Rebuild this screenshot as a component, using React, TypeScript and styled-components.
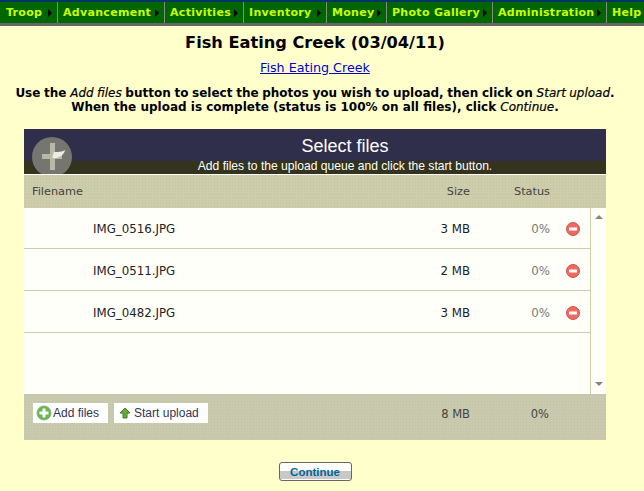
import * as React from 'react'
import styled, {createGlobalStyle, css} from 'styled-components'

const dots = (color: string, tile: number) => css`
  background-image: radial-gradient(${color} 0.6px, transparent 0.7px);
  background-size: ${tile}px ${tile}px;
`

const GlobalStyle = createGlobalStyle`
  html, body {
    margin: 0;
    padding: 0;
    background-color: #ffffcc;
    ${dots('#fdfdb0', 4)}
  }
  body {
    font-family: 'DejaVu Sans', Verdana, sans-serif;
    color: #000;
  }
`

const NavBar = styled.nav`
  display: flex;
  height: 21px;
  overflow: hidden;
  background-color: #006600;
  ${dots('#004d00', 6)}
  border-top: solid 2px #003366;
  border-bottom: solid 3px #666666;
`

const NavItem = styled.div<{$w: number}>`
  display: flex;
  align-items: center;
  flex: none;
  width: ${p => p.$w}px;
  box-sizing: border-box;
  padding-left: 5px;
  border-right: solid 1px #888888;
  font-size: 11px;
  font-weight: bold;
  letter-spacing: 0.3px;
  color: #ccff00;
  white-space: nowrap;

  &:first-child {
    padding-left: 6px;
  }
`

const NavArrow = styled.span`
  margin-left: auto;
  margin-right: 5px;
  border-left: solid 4px #000;
  border-top: solid 4px transparent;
  border-bottom: solid 4px transparent;
`

const Main = styled.main`
  display: flex;
  flex-direction: column;
  align-items: center;
  width: 630px;
`

const Title = styled.h1`
  margin: 7px 0 0;
  font-size: 16.2px;
  line-height: 20px;
  font-weight: bold;
`

const AlbumLink = styled.a`
  margin-top: 7px;
  font-size: 12.7px;
  line-height: 16px;
  color: #0000cc;
  text-decoration: underline;
`

const Intro = styled.p`
  margin: 10px 0 0;
  font-size: 12px;
  line-height: 14px;
  font-weight: bold;
  text-align: center;
  white-space: nowrap;

  em {
    font-weight: normal;
    -webkit-text-stroke: 0.2px #000;
  }
`

const IntroLead = styled.span`
  word-spacing: -0.5px;
`

const Uploader = styled.section`
  width: 582px;
  margin: 15px 0 0 24px;
  align-self: flex-start;
`

const Header = styled.header`
  position: relative;
  height: 45px;
  display: flex;
  flex-direction: column;
  align-items: center;
  background: linear-gradient(#2f2f4c 0 32px, #33331e 32px);
  color: #fff;
  border-bottom: solid 1px #fff;
`

const HeaderTitle = styled.h3`
  margin: 7px 0 0 60px;
  font-family: 'Liberation Sans', Arial, sans-serif;
  font-size: 18px;
  line-height: 20px;
  font-weight: normal;
`

const HeaderNote = styled.div`
  margin: 3px 0 0 60px;
  font-family: 'Liberation Sans', Arial, sans-serif;
  font-size: 12.1px;
  line-height: 14px;
`

const PlusBadge = styled.svg`
  position: absolute;
  left: 8px;
  top: 8px;
`

const Columns = styled.div`
  display: grid;
  grid-template-columns: 1fr 60px 80px 56px;
  align-items: center;
  height: 33px;
  padding: 0 0 0 8px;
  background-color: #cdcdaa;
  ${dots('#c2c2a6', 3)}
  color: #444444;
  font-size: 11.3px;
`

const RightCell = styled.span`
  text-align: right;
`

const ListArea = styled.div`
  display: flex;
  height: 186px;
  background-color: #fffffa;
  ${dots('#ffffd8', 4)}
`

const Rows = styled.div`
  flex: 1;
  margin-top: -1px;
`

const FileRow = styled.div`
  display: grid;
  grid-template-columns: 1fr 60px 80px 40px;
  align-items: center;
  box-sizing: border-box;
  height: 42px;
  padding: 2px 0 0 69px;
  border-bottom: solid 1px #cdcdaa;
  font-size: 11.8px;
  color: #222222;
`

const Percent = styled.span`
  text-align: right;
  color: #777777;
`

const RemoveIcon = styled.svg`
  justify-self: end;
  margin-right: 10px;
`

const Scrollbar = styled.div`
  display: flex;
  flex-direction: column;
  justify-content: space-between;
  align-items: center;
  flex: none;
  width: 16px;
  padding: 7px 0 8px;
  box-sizing: border-box;
  border-left: solid 1px #cdcdaa;
`

const ScrollArrow = styled.span<{$down?: boolean}>`
  border-left: solid 4px transparent;
  border-right: solid 4px transparent;
  ${p => p.$down
    ? 'border-top: solid 4px #888877;'
    : 'border-bottom: solid 4px #888877;'}
`

const Footer = styled.footer`
  display: grid;
  grid-template-columns: 1fr 60px 79px 57px;
  align-items: center;
  box-sizing: border-box;
  height: 46px;
  padding: 0 0 7px 9px;
  background-color: #c9c9ad;
  ${dots('#c0c0a6', 3)}
  color: #444444;
  font-size: 11.5px;
`

const FooterButtons = styled.div`
  display: flex;
  gap: 6px;
  margin-bottom: 2px;
`

const FooterButton = styled.a`
  display: flex;
  align-items: center;
  gap: 1px;
  height: 20px;
  padding: 0 9px 0 3px;
  background: #fff;
  font-family: 'Liberation Sans', Arial, sans-serif;
  font-size: 12px;
  color: #333355;
`

const ContinueButton = styled.button`
  display: block;
  width: 73px;
  height: 19px;
  margin: 22px 0 0;
  padding: 0;
  border: solid 1px #666666;
  border-radius: 3px;
  background: linear-gradient(#ffffff 0 8px, #c8c8c8 8px 16px, #ffffff 16px);
  color: #006699;
  font-family: 'Liberation Sans', Arial, sans-serif;
  font-size: 11.5px;
  font-weight: bold;
`

const navItems: [string, number][] = [
  ['Troop', 58],
  ['Advancement', 107],
  ['Activities', 79],
  ['Inventory', 83],
  ['Money', 60],
  ['Photo Gallery', 106],
  ['Administration', 114],
  ['Help', 60],
]

const files = [
  {name: 'IMG_0516.JPG', size: '3 MB'},
  {name: 'IMG_0511.JPG', size: '2 MB'},
  {name: 'IMG_0482.JPG', size: '3 MB'},
]

function Remove() {
  return (
    <RemoveIcon width='14' height='14' viewBox='0 0 14 14'>
      <circle cx='7' cy='7' r='6.5' fill='#ee6a60' stroke='#c9584c' />
      <rect x='3' y='5.5' width='8' height='3' fill='#fff' />
    </RemoveIcon>
  )
}

export default function App() {
  return (
    <>
      <GlobalStyle />
      <NavBar>
        {navItems.map(([label, w]) => (
          <NavItem key={label} $w={w}>
            {label}
            {label !== 'Help' && <NavArrow />}
          </NavItem>
        ))}
      </NavBar>
      <Main>
        <Title>Fish Eating Creek (03/04/11)</Title>
        <AlbumLink href='#'>Fish Eating Creek</AlbumLink>
        <Intro>
          <IntroLead>
            Use the <em>Add files</em> button to select the photos you wish to upload, then click on <em>Start upload</em>.
          </IntroLead>
          <br />
          When the upload is complete (status is 100% on all files), click <em>Continue</em>.
        </Intro>
        <Uploader>
          <Header>
            <PlusBadge width='41' height='37' viewBox='0 0 41 37'>
              <circle cx='20' cy='20' r='20' fill='#767670' />
              <path d='M18 6h5v11h7v5h-7v11h-5V22h-8v-5h8z' fill='#b8b8a8' />
              <path d='M22 15c4 0 8 0 11-2-1 5-6 9-13 8z' fill='#ecece0' />
            </PlusBadge>
            <HeaderTitle>Select files</HeaderTitle>
            <HeaderNote>Add files to the upload queue and click the start button.</HeaderNote>
          </Header>
          <Columns>
            <span>Filename</span>
            <RightCell>Size</RightCell>
            <RightCell>Status</RightCell>
          </Columns>
          <ListArea>
            <Rows>
              {files.map(f => (
                <FileRow key={f.name}>
                  <span>{f.name}</span>
                  <RightCell>{f.size}</RightCell>
                  <Percent>0%</Percent>
                  <Remove />
                </FileRow>
              ))}
            </Rows>
            <Scrollbar>
              <ScrollArrow />
              <ScrollArrow $down />
            </Scrollbar>
          </ListArea>
          <Footer>
            <FooterButtons>
              <FooterButton>
                <svg width='16' height='16' viewBox='0 0 16 16'>
                  <circle cx='8' cy='8' r='7' fill='#66b84e' stroke='#8fae86' />
                  <path d='M6.5 3.5h3v3h3v3h-3v3h-3v-3h-3v-3h3z' fill='#fff' />
                </svg>
                Add files
              </FooterButton>
              <FooterButton>
                <svg width='16' height='16' viewBox='0 0 16 16'>
                  <path d='M8 3l5 5h-3v5H6V8H3z' fill='#6aa83a' stroke='#3f7d20' />
                </svg>
                Start upload
              </FooterButton>
            </FooterButtons>
            <RightCell>8 MB</RightCell>
            <RightCell>0%</RightCell>
          </Footer>
        </Uploader>
        <ContinueButton>Continue</ContinueButton>
      </Main>
    </>
  )
}
